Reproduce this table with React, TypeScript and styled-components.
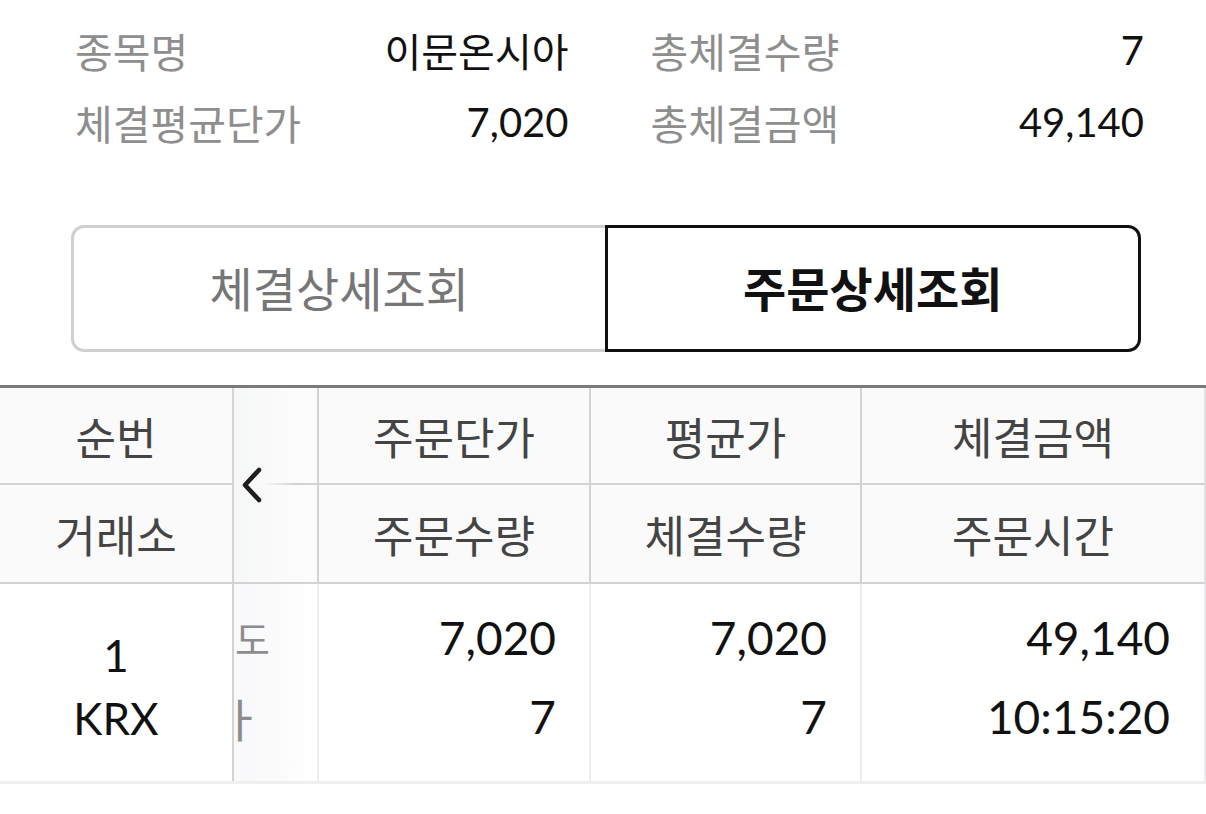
import styled, { createGlobalStyle } from "styled-components";

const GlobalStyle = createGlobalStyle`
  * { box-sizing: border-box; }
  body {
    margin: 0;
    background: #ffffff;
    font-family: "Lato", "Noto Sans CJK KR", sans-serif;
    color: #111111;
  }
`;

const summary = [
  [
    { label: "종목명", value: "이문온시아" },
    { label: "체결평균단가", value: "7,020" },
  ],
  [
    { label: "총체결수량", value: "7" },
    { label: "총체결금액", value: "49,140" },
  ],
];

const App = () => {
  return (
    <Page>
      <GlobalStyle />
      <Summary>
        {summary.map((col, i) => (
          <SummaryCol key={i}>
            {col.map((row) => (
              <SummaryRow key={row.label}>
                <Label>{row.label}</Label>
                <Value>{row.value}</Value>
              </SummaryRow>
            ))}
          </SummaryCol>
        ))}
      </Summary>

      <Tabs>
        <Tab>체결상세조회</Tab>
        <Tab $active>주문상세조회</Tab>
      </Tabs>

      <Table>
        <HeadCell>순번</HeadCell>
        <ToggleCell>
          <ToggleLine />
          <svg width="24" height="38" viewBox="0 0 24 38">
            <polyline points="19,4 5,19 19,34" fill="none" stroke="#1e1e1e" strokeWidth="4.6" strokeLinecap="round" strokeLinejoin="round" />
          </svg>
        </ToggleCell>
        <HeadCell>주문단가</HeadCell>
        <HeadCell>평균가</HeadCell>
        <HeadCell $last>체결금액</HeadCell>

        <HeadCell>거래소</HeadCell>
        <HeadCell>주문수량</HeadCell>
        <HeadCell>체결수량</HeadCell>
        <HeadCell $last>주문시간</HeadCell>

        <IndexCell>
          <span>1</span>
          <span>KRX</span>
        </IndexCell>
        <HiddenCell>
          <Peek $shift={1} $size={38}>도</Peek>
          <Peek $shift={-14} $size={46}>ㅏ</Peek>
        </HiddenCell>
        <NumCell>
          <span>7,020</span>
          <span>7</span>
        </NumCell>
        <NumCell>
          <span>7,020</span>
          <span>7</span>
        </NumCell>
        <NumCell $last>
          <span>49,140</span>
          <span>10:15:20</span>
        </NumCell>
      </Table>
    </Page>
  );
};

export default App;

const Page = styled.div`
  width: 1206px;
  height: 814px;
  overflow: hidden;
  padding-top: 14px;
`;

const Summary = styled.div`
  display: grid;
  grid-template-columns: 1fr 1fr;
  column-gap: 82px;
  padding: 0 62px 0 75px;
`;

const SummaryCol = styled.div`
  display: flex;
  flex-direction: column;
`;

const SummaryRow = styled.div`
  display: flex;
  justify-content: space-between;
  align-items: center;
  height: 72px;
  font-size: 40px;
`;

const Label = styled.span`
  color: #8e8e8e;
  font-size: 41px;
`;

const Value = styled.span`
  color: #111111;
`;

const Tabs = styled.div`
  display: flex;
  margin: 67px 65px 0 71px;
  height: 127px;
`;

const Tab = styled.div<{ $active?: boolean }>`
  flex: 1;
  display: flex;
  align-items: center;
  justify-content: center;
  padding-bottom: 4px;
  font-size: 47px;
  font-weight: ${(p) => (p.$active ? 700 : 400)};
  color: ${(p) => (p.$active ? "#111111" : "#767676")};
  border: 3px solid ${(p) => (p.$active ? "#111111" : "#d0d0d0")};
  border-right: ${(p) => (p.$active ? "3px solid #111111" : "none")};
  border-radius: ${(p) => (p.$active ? "0 13px 13px 0" : "13px 0 0 13px")};
`;

const Table = styled.div`
  margin-top: 33px;
  display: grid;
  grid-template-columns: 234px 85px 272px 271px 1fr;
  grid-template-rows: 97px 99px 197px;
  border-top: 3px solid #7a7a7a;
  border-bottom: 3px solid #efefef;
`;

const HeadCell = styled.div<{ $last?: boolean }>`
  display: flex;
  align-items: center;
  justify-content: center;
  background: #fafafa;
  color: #444444;
  font-size: 44px;
  border-bottom: 2px solid #d3d3d3;
  border-right: ${(p) => (p.$last ? "2px solid #e2e2e2" : "2px solid #d3d3d3")};
`;

const ToggleCell = styled.div`
  grid-row: span 2;
  position: relative;
  display: flex;
  align-items: center;
  padding-left: 6px;
  background: linear-gradient(90deg, #f6f7f8 0%, #fbfbfb 60%, #fcfcfc 100%);
  border-bottom: 2px solid #d3d3d3;
  border-right: 2px solid #d3d3d3;
`;

const ToggleLine = styled.div`
  position: absolute;
  left: 28px;
  right: 0;
  top: 95px;
  height: 2px;
  background: linear-gradient(90deg, rgba(211, 211, 211, 0) 0%, #d3d3d3 60%);
`;

const IndexCell = styled.div`
  display: flex;
  flex-direction: column;
  align-items: center;
  justify-content: center;
  padding-top: 8px;
  font-size: 44px;
  line-height: 63px;
  color: #111111;
  border-right: 2px solid #d3d3d3;
`;

const HiddenCell = styled.div`
  display: flex;
  flex-direction: column;
  padding-top: 14px;
  background: linear-gradient(90deg, #f7f8fa 0%, #fbfbfc 50%, #ffffff 100%);
  border-right: 2px solid #ececee;
`;

const Peek = styled.div<{ $shift: number; $size: number }>`
  height: 79px;
  display: flex;
  align-items: center;
  margin-left: ${(p) => p.$shift}px;
  font-size: ${(p) => p.$size}px;
  color: #7a7a7a;
  opacity: 0.85;
`;

const NumCell = styled.div<{ $last?: boolean }>`
  display: flex;
  flex-direction: column;
  align-items: flex-end;
  padding-top: 14px;
  padding-right: ${(p) => (p.$last ? "34px" : "33px")};
  font-size: 46px;
  line-height: 79px;
  color: #111111;
  border-right: 2px solid #ececee;
`;
